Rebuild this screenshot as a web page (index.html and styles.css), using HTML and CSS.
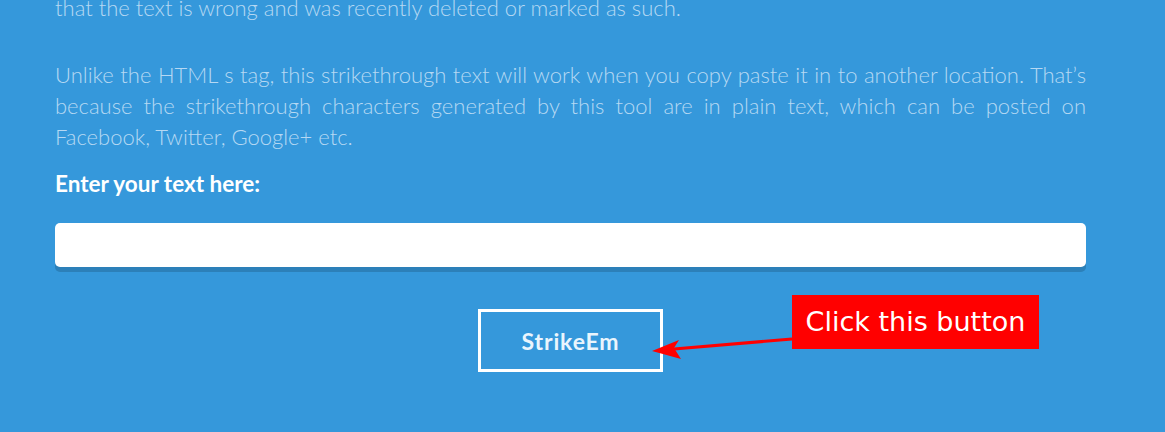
FILE: index.html
```html
<!DOCTYPE html>
<html>
<head>
<meta charset="utf-8">
<link rel="stylesheet" href="styles.css">
</head>
<body>
<main class="page">
  <p class="para para-first">that the text is wrong and was recently deleted or marked as such.</p>
  <p class="para">Unlike the HTML s tag, this strikethrough text will work when you copy paste it in to another location. That’s because the strikethrough characters generated by this tool are in plain text, which can be posted on Facebook, Twitter, Google+ etc.</p>
  <label class="label" for="txt">Enter your text here:</label>
  <input class="text-input" id="txt" type="text">
  <div class="actions">
    <button class="btn" type="button">StrikeEm</button>
  </div>
</main>
<div class="callout">Click this button</div>
<svg class="arrow" width="160" height="40" viewBox="0 0 160 40" xmlns="http://www.w3.org/2000/svg">
  <line x1="142" y1="13" x2="24" y2="23" stroke="#ff0000" stroke-width="3"/>
  <polygon points="2,25 29,14 24,22 31,33" fill="#ff0000"/>
</svg>
</body>
</html>
```
FILE: styles.css
```css
html, body {
  margin: 0;
  padding: 0;
}
body {
  background: #3598db;
  font-family: Lato, "Open Sans", sans-serif;
  width: 1165px;
  height: 432px;
  overflow: hidden;
  position: relative;
}
.page {
  padding: 0 79px 0 55px;
  display: flex;
  flex-direction: column;
  margin-top: -8px;
}
.para {
  margin: 0 0 36px;
  font-size: 22px;
  font-weight: 300;
  line-height: 31px;
  color: #b6d8f3;
  text-align: justify;
}
.para:not(.para-first) {
  margin-bottom: 17px;
}
.label {
  font-size: 22.5px;
  font-weight: 700;
  color: #ffffff;
  line-height: 30px;
}
.text-input {
  margin-top: 24px;
  height: 44px;
  border: 0;
  border-radius: 5px;
  background: #fff;
  box-shadow: 0 5px 0 #2c80b9;
  padding: 0 12px;
  box-sizing: border-box;
  outline: none;
}
.actions {
  display: flex;
  padding-left: 423px;
  margin-top: 42px;
}
.btn {
  width: 185px;
  height: 63px;
  border: 3px solid #ffffff;
  background: transparent;
  color: #eaf5fd;
  font-family: Lato, sans-serif;
  font-weight: 700;
  font-size: 23px;
  letter-spacing: 0.85px;
  cursor: pointer;
  padding: 0;
}
.callout {
  position: absolute;
  left: 792px;
  top: 295px;
  width: 247px;
  height: 54px;
  background: #ff0000;
  color: #ffffff;
  font-family: "DejaVu Sans", sans-serif;
  font-size: 27px;
  line-height: 54px;
  text-align: center;
}
.arrow {
  position: absolute;
  left: 650px;
  top: 326px;
}
```
